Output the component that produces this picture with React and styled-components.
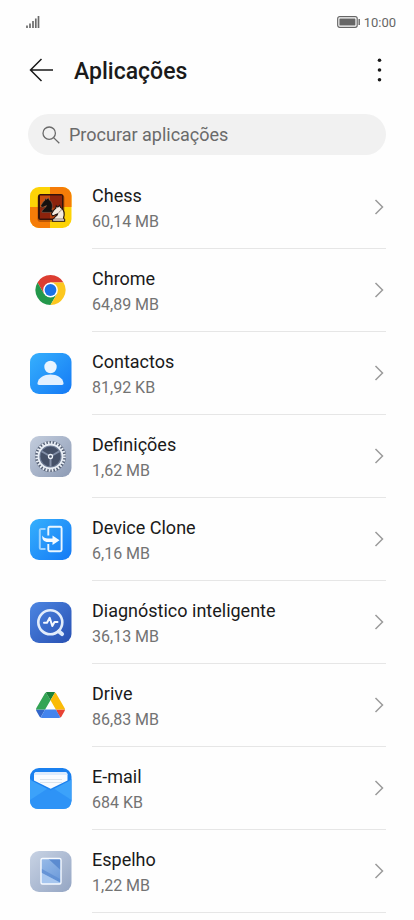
import React from 'react'
import styled, {createGlobalStyle} from 'styled-components'

const GlobalStyle = createGlobalStyle`
    * {
        box-sizing: border-box;
    }

    body {
        margin: 0;
        background: #fefefe;
        color: #1a1a1a;
        font-family: Roboto, "Noto Sans", sans-serif;
    }
`

// App icons
function Tile({id, from, to, children}) {
    return (
        <Icon viewBox="0 0 42 41" aria-hidden="true">
            <defs>
                <linearGradient id={id} x1="0" y1="0" x2="1" y2="1">
                    <stop offset="0" stopColor={from} />
                    <stop offset="1" stopColor={to} />
                </linearGradient>
            </defs>
            <rect width="41.5" height="41" rx="9" fill={`url(#${id})`} />
            {children}
        </Icon>
    )
}

const knight = 'M2 15.500h11.500v-2l-1.200-.8C13.500 9 13 4.500 9.500 2.300L8.700.3 7 2 5.500.8 5.200 2.800 3.200 4.800 .8 8.600 2 10.300 3.600 9.800 6.800 8.400C6.500 10.500 3.800 11 3.300 12.800L2 13.700z'

function ChessIcon() {
    return (
        <Icon viewBox="0 0 42 41" aria-hidden="true">
            <clipPath id="chess-clip">
                <rect width="41.5" height="41" rx="9" />
            </clipPath>
            <g clipPath="url(#chess-clip)">
                <rect width="42" height="42" fill="#fdd306" />
                <path d="M20 0h22v20H20zM0 20h20v22H0z" fill="#f57c08" />
                <rect x="7.500" y="8" width="27" height="27" rx="3" fill="#7a2a00" opacity="0.45" />
                <rect x="8" y="7" width="25.500" height="26" rx="2.500" fill="#35120a" />
                <path d="M10 8.500h10v12H10z" fill="#c9500f" />
                <path d="M20 8.500h12v12H20z" fill="#8c230c" />
                <path d="M10 20.500h10v11H10z" fill="#8c230c" />
                <path d="M20 20.500h12v11H20z" fill="#b8430d" />
            </g>
            <path d={knight} transform="translate(10 10.500) scale(.96)" fill="#15100e" stroke="#8b7464" strokeWidth="0.5" />
            <path d={knight} transform="translate(20.500 18) scale(1.050)" fill="#f4ebe0" stroke="#211512" strokeWidth="1" />
            <path d="M24 32h10M28.500 25.500c2-1 3-2.500 3-4" fill="none" stroke="#6b574b" strokeWidth="0.7" />
        </Icon>
    )
}

function ChromeIcon() {
    return (
        <Icon viewBox="0 0 42 41" aria-hidden="true">
            <g transform="translate(20.500 20)">
                <path d="M-13 -7.500A15 15 0 0 1 13 -7.500H0L-6.500 3.750z" fill="#dc3d31" />
                <path d="M-13 -7.500A15 15 0 0 0 0 15L6.500 3.750H-6.500z" fill="#23984b" />
                <path d="M13 -7.500A15 15 0 0 1 0 15L6.500 3.750 0 -7.500z" fill="#fcc71f" />
                <circle r="7.400" fill="#fff" />
                <circle r="5.900" fill="#1b72e6" />
            </g>
        </Icon>
    )
}

function ContactsIcon() {
    return (
        <Tile id="contacts" from="#36b0fd" to="#1479f5">
            <circle cx="20.500" cy="14" r="6.200" fill="#eaf5ff" />
            <path d="M9.200 32c-1.300 0-1.900-.8-1.700-2C8.500 24.500 14 21.500 20.500 21.500s12 3 13 8.500c.2 1.200-.4 2-1.700 2z" fill="#e2f0ff" />
        </Tile>
    )
}

function SettingsIcon() {
    return (
        <Tile id="settings" from="#c3cddd" to="#8d9bb5">
            <circle cx="20.500" cy="20.500" r="15.500" fill="#4b566c" opacity="0.9" />
            <circle cx="20.500" cy="20.500" r="13.800" fill="none" stroke="#e8edf5" strokeWidth="3" strokeDasharray="1.700 1.397" />
            <circle cx="20.500" cy="20.500" r="12" fill="#727f98" stroke="#e9eef5" strokeWidth="1.800" />
            <circle cx="20.500" cy="20.500" r="10" fill="#465168" />
            <path d="M20.500 20.500L12 15.500M20.500 20.500l8.500-5M20.500 20.500v10" stroke="#8490a8" strokeWidth="2" />
            <circle cx="20.500" cy="20.500" r="2" fill="#465168" stroke="#eef2f8" strokeWidth="1.300" />
        </Tile>
    )
}

function CloneIcon() {
    return (
        <Tile id="clone" from="#36b0fd" to="#1479f5">
            <path d="M15.500 10h-4.200q-1.500 0-1.500 1.500v17q0 1.500 1.500 1.500h4.200" fill="none" stroke="#9ed3fe" strokeWidth="2" />
            <path d="M18.300 16.500V9.200q0-1.500 1.500-1.500h10.300q1.500 0 1.500 1.500v21.600q0 1.500-1.500 1.500H19.800q-1.500 0-1.500-1.500V25" fill="none" stroke="#eaf6ff" strokeWidth="1.900" />
            <path d="M12.500 16.500c1 2.400 3 3 6 2.900h4v-3l7 4.900-7 4.700v-3h-4.500c-4 0-6.500-2.500-5.500-6.500z" fill="#f3faff" />
        </Tile>
    )
}

function DiagnosticIcon() {
    return (
        <Tile id="diagnostic" from="#4d86e2" to="#2850b2">
            <path d="M29 29.500l3 2.500" stroke="#dce9fb" strokeWidth="4.200" strokeLinecap="round" />
            <circle cx="20.300" cy="20.300" r="12" fill="none" stroke="#e3edfb" strokeWidth="2.600" />
            <path d="M14 20.800h3l2.700-5 2.600 8.200 2.200-4h3" fill="none" stroke="#f5f9ff" strokeWidth="2" strokeLinecap="round" strokeLinejoin="round" />
        </Tile>
    )
}

function DriveIcon() {
    return (
        <Icon viewBox="0 0 42 41" aria-hidden="true">
            <g transform="translate(6 7) scale(.332)">
                <path d="M6.600 66.850l3.850 6.650c.8 1.400 1.950 2.500 3.300 3.300L27.500 53H0c0 1.550.4 3.100 1.200 4.500z" fill="#3266ca" />
                <path d="M43.650 25L29.900 1.200c-1.350.8-2.500 1.900-3.300 3.300l-25.400 44A9 9 0 0 0 0 53h27.500z" fill="#34a455" />
                <path d="M73.550 76.800c1.350-.8 2.500-1.900 3.300-3.300l1.600-2.750L86.100 57.500c.8-1.400 1.200-2.950 1.200-4.500H59.800l5.850 11.500z" fill="#e84334" />
                <path d="M43.650 25L57.400 1.200C56.050.4 54.500 0 52.900 0H34.400c-1.600 0-3.150.45-4.500 1.200z" fill="#1b813a" />
                <path d="M59.800 53H27.500L13.750 76.800c1.350.8 2.900 1.200 4.500 1.200h50.800c1.600 0 3.150-.45 4.500-1.200z" fill="#4384ee" />
                <path d="M73.400 26.500l-12.700-22c-.8-1.400-1.950-2.500-3.300-3.300L43.650 25l16.150 28h27.450c0-1.550-.4-3.100-1.200-4.500z" fill="#fabb08" />
            </g>
        </Icon>
    )
}

function MailIcon() {
    return (
        <Tile id="mail" from="#1a80ef" to="#1a80ef">
            <path d="M0 10.500q.5 1.500 2.500 2.500l18.200 9.500L39 13q2-1 2.500-2.500V32q0 9-9 9H9q-9 0-9-9z" fill="#3ca2fa" />
            <path d="M0 32l20.700-13.500L41.500 32q0 9-9 9H9q-9 0-9-9z" fill="#278cf5" opacity="0.65" />
            <path d="M4 7q0-3 3-3h27.500q3 0 3 3v5.500L20.700 20.800 4 12.500z" fill="#f8fbff" />
            <path d="M4 7q0-3 3-3h27.500q3 0 3 3z" fill="#dcebfd" />
            <path d="M10 11.500h22M10 14.500h22" stroke="#dde4eb" strokeWidth="1" />
        </Tile>
    )
}

function MirrorIcon() {
    return (
        <Tile id="mirror" from="#c8d3e4" to="#94a5c3">
            <defs>
                <linearGradient id="mirror-glass" x1="0" y1="0" x2="0.600" y2="1">
                    <stop offset="0" stopColor="#98bbe8" />
                    <stop offset="1" stopColor="#6e9cdb" />
                </linearGradient>
            </defs>
            <rect x="11" y="7.500" width="20" height="25.500" rx="1.500" fill="url(#mirror-glass)" />
            <path d="M18 7.500h13v12z" fill="#5b8bd0" />
            <path d="M11 17.500L31 28.500V32L11 21.500z" fill="#5c8cd1" opacity="0.75" />
            <path d="M11 21.500L31 32v1H11z" fill="#a6c6ef" />
            <rect x="11" y="7.500" width="20" height="25.500" rx="1.500" fill="none" stroke="#f6faff" strokeWidth="1.400" />
        </Tile>
    )
}

const apps = [
    {name: 'Chess', size: '60,14 MB', icon: ChessIcon},
    {name: 'Chrome', size: '64,89 MB', icon: ChromeIcon},
    {name: 'Contactos', size: '81,92 KB', icon: ContactsIcon},
    {name: 'Definições', size: '1,62 MB', icon: SettingsIcon},
    {name: 'Device Clone', size: '6,16 MB', icon: CloneIcon},
    {name: 'Diagnóstico inteligente', size: '36,13 MB', icon: DiagnosticIcon},
    {name: 'Drive', size: '86,83 MB', icon: DriveIcon},
    {name: 'E-mail', size: '684 KB', icon: MailIcon},
    {name: 'Espelho', size: '1,22 MB', icon: MirrorIcon},
]

function App() {
    return (
        <>
            <GlobalStyle />
            <StatusBar>
                <svg width="14" height="12" viewBox="0 0 14 12" aria-hidden="true">
                    <path d="M1 9.500V12M4 7.500V12M7 5V12M9.800 2.500V12M12.500 0V12" stroke="#6b6b6b" strokeWidth="1.700" />
                </svg>
                <Clock>
                    <svg width="24" height="12" viewBox="0 0 24 12" aria-hidden="true">
                        <rect x="0.700" y="0.700" width="19.500" height="10.600" rx="2" fill="none" stroke="#666" strokeWidth="1.200" />
                        <rect x="2.400" y="2.400" width="16" height="7.200" rx="0.500" fill="#666" />
                        <path d="M22.200 3v6" stroke="#666" strokeWidth="1.400" />
                    </svg>
                    10:00
                </Clock>
            </StatusBar>

            <Header>
                <IconButton aria-label="Voltar">
                    <svg width="24" height="24" viewBox="0 0 24 24" fill="none" stroke="#1a1a1a" strokeWidth="1.500">
                        <path d="M12.500 1L1.500 12l11 11M1.500 12H24" />
                    </svg>
                </IconButton>
                <h1>Aplicações</h1>
                <IconButton aria-label="Mais opções">
                    <svg width="24" height="24" viewBox="0 0 24 24" fill="#1a1a1a">
                        <circle cx="12.500" cy="2.300" r="1.800" />
                        <circle cx="12.500" cy="12" r="1.800" />
                        <circle cx="12.500" cy="21.700" r="1.800" />
                    </svg>
                </IconButton>
            </Header>

            <Search>
                <svg width="18" height="18" viewBox="0 0 18 18" fill="none" stroke="#6a6a6a" strokeWidth="1.300" aria-hidden="true">
                    <circle cx="7.200" cy="7.200" r="6.200" />
                    <path d="M11.600 11.600L17.300 17.300" />
                </svg>
                <input type="text" aria-label="Procurar aplicações" placeholder="Procurar aplicações" />
            </Search>

            <AppList>
                {apps.map(({name, size, icon: AppIcon}) => (
                    <li key={name}>
                        <AppLink href="#">
                            <AppIcon />
                            <Details>
                                <Label>
                                    <Name>{name}</Name>
                                    <Size>{size}</Size>
                                </Label>
                                <svg width="12" height="16" viewBox="0 0 12 16" fill="none" stroke="#9b9b9b" strokeWidth="1.500" aria-hidden="true">
                                    <path d="M1.500 1l7 7-7 7" />
                                </svg>
                            </Details>
                        </AppLink>
                    </li>
                ))}
            </AppList>
        </>
    )
}

const StatusBar = styled.div`
    display: flex;
    align-items: center;
    justify-content: space-between;
    height: 44px;
    padding: 0 18px 0 26px;
`

const Clock = styled.div`
    display: flex;
    align-items: center;
    gap: 3px;
    color: #666;
    font-size: 13px;
    font-weight: 400;
`

const Header = styled.header`
    display: flex;
    align-items: center;
    height: 52px;
    padding: 0 23px 0 29px;

    h1 {
        flex: 1;
        margin: 0 0 0 21px;
        padding-top: 4px;
        font-size: 23px;
        font-weight: 500;
        line-height: 28px;
    }
`

const IconButton = styled.button`
    display: flex;
    padding: 0;
    border: none;
    background: none;
    cursor: pointer;
`

const Search = styled.div`
    display: flex;
    align-items: center;
    gap: 9px;
    height: 41px;
    margin: 18px 28px 11px;
    padding: 0 14px;
    border-radius: 21px;
    background: #f1f1f1;

    input {
        flex: 1;
        min-width: 0;
        padding: 0;
        border: none;
        outline: none;
        background: none;
        color: #1a1a1a;
        font-family: inherit;
        font-size: 18px;
    }

    input::placeholder {
        color: #6a6a6a;
        opacity: 1;
    }
`

const AppList = styled.ul`
    margin: 0;
    padding: 0 28px 0 30px;
    list-style: none;
`

const AppLink = styled.a`
    display: flex;
    align-items: center;
    gap: 20px;
    color: inherit;
    text-decoration: none;
`

const Icon = styled.svg`
    flex: none;
    width: 42px;
    height: 41px;
`

const Details = styled.div`
    display: flex;
    flex: 1;
    align-items: center;
    justify-content: space-between;
    height: 83px;
    border-bottom: 1px solid #e6e6e6;
`

const Label = styled.div`
    padding-top: 4px;
    line-height: 26px;
`

const Name = styled.div`
    font-size: 18px;
`

const Size = styled.div`
    color: #737373;
    font-size: 16px;
`

export default App
